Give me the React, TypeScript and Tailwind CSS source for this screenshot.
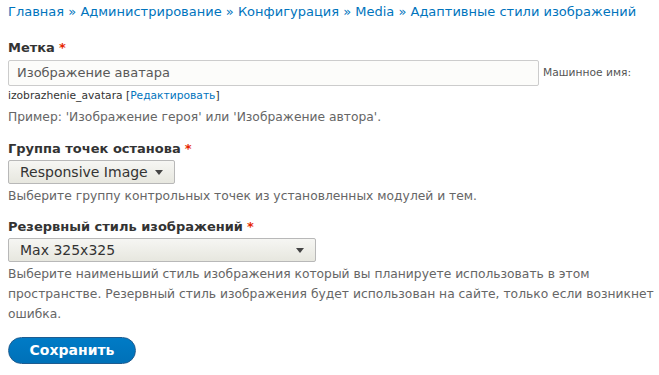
import React from "react";

const crumbs = ["Главная", "Администрирование", "Конфигурация", "Media", "Адаптивные стили изображений"];

const Req = () => <span className="text-[#e62600] ml-1">*</span>;

const Arrow = () => (
  <svg width="8" height="5" viewBox="0 0 8 5" className="shrink-0">
    <path d="M0 0h8L4 5z" fill="#444" />
  </svg>
);

const selectClass =
  "flex items-center justify-between h-[24px] pl-[11px] pr-[11px] border border-[#b8b8b8] rounded-[2px] bg-gradient-to-b from-[#f6f6f3] to-[#e7e7df] text-[14px] text-[#333]";

export default function App() {
  return (
    <div className="min-h-[375px] bg-white pl-[8px] pr-0 pt-[3px] font-['DejaVu_Sans',sans-serif] text-[#333]">
      <div className="text-[13px] leading-[18px] text-[#0074bd]">
        {crumbs.map((c, i) => (
          <span key={c}>
            {i > 0 && " » "}
            {c}
          </span>
        ))}
      </div>

      <div className="mt-[18px]">
        <div className="text-[13px] leading-[18px] font-bold text-[#333]">
          Метка
          <Req />
        </div>
        <div className="flex items-center mt-[3px]">
          <div className="w-[531px] h-[26px] border border-[#ccc] rounded-[2px] bg-[#fcfcfa] flex items-center px-[8px] text-[13px] text-[#595959]">
            Изображение аватара
          </div>
          <span className="ml-[4px] text-[10.7px] text-[#555]">Машинное имя:</span>
        </div>
        <div className="text-[10.7px] leading-[14px] mt-[3px] text-[#333]">
          izobrazhenie_avatara [<span className="text-[#0074bd]">Редактировать</span>]
        </div>
        <div className="text-[12.3px] leading-[18px] mt-[5px] text-[#666]">
          Пример: 'Изображение героя' или 'Изображение автора'.
        </div>
      </div>

      <div className="mt-[14px]">
        <div className="text-[13px] leading-[18px] font-bold">
          Группа точек останова
          <Req />
        </div>
        <div className={`${selectClass} w-[167px] mt-[2px]`}>
          <span>Responsive Image</span>
          <Arrow />
        </div>
        <div className="text-[12.3px] leading-[18px] mt-[3px] text-[#666]">
          Выберите группу контрольных точек из установленных модулей и тем.
        </div>
      </div>

      <div className="mt-[13px]">
        <div className="text-[13px] leading-[18px] font-bold">
          Резервный стиль изображений
          <Req />
        </div>
        <div className={`${selectClass} w-[308px] mt-[2px]`}>
          <span>Max 325x325</span>
          <Arrow />
        </div>
        <div className="text-[12.3px] leading-[20px] mt-[2px] text-[#666]">
          Выберите наименьший стиль изображения который вы планируете использовать в этом пространстве. Резервный стиль
          изображения будет использован на сайте, только если возникнет ошибка.
        </div>
      </div>

      <button className="mt-[13px] h-[27px] w-[128px] rounded-full border border-[#1e5c90] bg-gradient-to-b from-[#007bc6] to-[#0071b8] text-white text-[14px] font-bold">
        Сохранить
      </button>
    </div>
  );
}
